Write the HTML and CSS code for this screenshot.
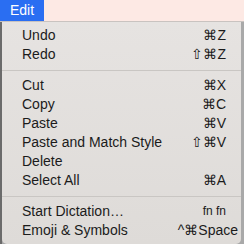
FILE: index.html
```html
<!DOCTYPE html>
<html lang="en">
<head>
  <meta charset="UTF-8" />
  <title>Edit menu</title>
  <link rel="stylesheet" href="styles.css">
</head>
<body>

<div class="menubar">
  <span class="menubar-item active">Edit</span>
</div>

<div class="stage">
  <ul class="menu">
    <li class="item"><span class="label">Undo</span><span class="keys">⌘Z</span></li>
    <li class="item"><span class="label">Redo</span><span class="keys">⇧⌘Z</span></li>
    <li class="sep"></li>
    <li class="item"><span class="label">Cut</span><span class="keys">⌘X</span></li>
    <li class="item"><span class="label">Copy</span><span class="keys">⌘C</span></li>
    <li class="item"><span class="label">Paste</span><span class="keys">⌘V</span></li>
    <li class="item"><span class="label">Paste and Match Style</span><span class="keys">⇧⌘V</span></li>
    <li class="item"><span class="label">Delete</span></li>
    <li class="item"><span class="label">Select All</span><span class="keys">⌘A</span></li>
    <li class="sep"></li>
    <li class="item"><span class="label">Start Dictation…</span><span class="keys small">fn fn</span></li>
    <li class="item"><span class="label">Emoji &amp; Symbols</span><span class="keys wide">^⌘Space</span></li>
  </ul>
</div>

</body>
</html>
```

FILE: styles.css
```css
* {
  box-sizing: border-box;
}

body {
  margin: 0;
  width: 244px;
  height: 244px;
  overflow: hidden;
  font-family: 'Liberation Sans', Arial, sans-serif;
  background: #6b6b6b;
  color: #1b1b1b;
}

.menubar {
  height: 22px;
  background: #fde9e4;
  border-bottom: 1px solid #c9c3c0;
  display: flex;
}

.menubar-item {
  padding: 0 10px;
  font-size: 14px;
  line-height: 21px;
}

.menubar-item.active {
  background: #2a6ef2;
  color: white;
}

/* dark desktop on the left, lighter window edge on the right */
.stage {
  padding-left: 2px;
  padding-right: 3px;
  background: linear-gradient(to right, #6b6b6b 0, #6b6b6b 2px, #a9a9a9 2px);
}

.menu {
  list-style: none;
  margin: 0;
  padding: 4px 15px 4px 20px;
  background: linear-gradient(#e6e3e1, #dedbd8);
  border-radius: 0 0 5px 5px;
  height: 222px;
}

.item {
  display: flex;
  justify-content: space-between;
  font-size: 14px;
  line-height: 19px;
  height: 19px;
}

.keys {
  white-space: nowrap;
}

.keys.small {
  font-size: 12px;
}

.keys.wide {
  margin-right: -12px;
}

.sep {
  height: 12px;
  margin: 0 -15px 0 -20px;
  display: flex;
  align-items: center;
}

.sep::before {
  content: "";
  flex: 1;
  height: 1px;
  background: #c9c6c3;
}
```
